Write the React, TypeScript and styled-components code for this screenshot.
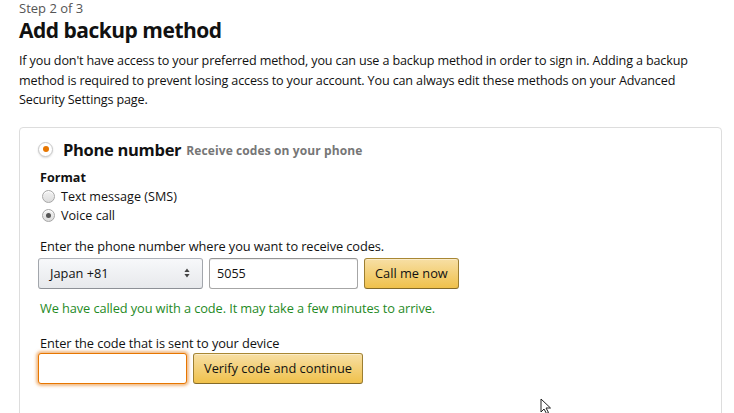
import styled, { createGlobalStyle } from "styled-components";

const GlobalStyle = createGlobalStyle`
  html, body {
    margin: 0;
    padding: 0;
    background: #fff;
    overflow: hidden;
  }
  body {
    font-family: "Open Sans", "Noto Sans", Arial, sans-serif;
    color: #111;
  }
`;

const Page = styled.main`
  position: relative;
  width: 734px;
  height: 413px;
  overflow: hidden;
  padding: 0 12px 0 19px;
  box-sizing: border-box;
`;

const StepLabel = styled.div`
  font-size: 13px;
  line-height: 14px;
  margin-top: 1px;
  color: #555;
`;

const Title = styled.h1`
  font-size: 21px;
  font-weight: 700;
  line-height: 25px;
  margin: 3px 0 8px;
  letter-spacing: -0.5px;
`;

const Intro = styled.p`
  font-size: 12.6px;
  line-height: 19.5px;
  margin: 0 0 17px;
  letter-spacing: -0.15px;
  color: #111;
`;

const Box = styled.section`
  border: 1px solid #ddd;
  border-radius: 4px;
  padding: 10px 20px 40px;
  height: 400px;
  box-sizing: border-box;
`;

const MethodHeader = styled.div`
  display: flex;
  align-items: center;
  gap: 10px;
  margin-left: -2px;
`;

const Radio = styled.span<{ $checked?: boolean; $accent?: boolean; $size: number }>`
  flex: none;
  width: ${({ $size }) => $size}px;
  height: ${({ $size }) => $size}px;
  border-radius: 50%;
  box-sizing: border-box;
  border: 1px solid ${({ $accent }) => ($accent ? "#c9c9c9" : "#a6a6a6")};
  background: ${({ $accent }) =>
    $accent ? "#fff" : "linear-gradient(#f2f2f2, #dcdcdc)"};
  box-shadow: ${({ $accent }) =>
    $accent ? "0 1px 2px rgba(0,0,0,.15)" : "inset 0 1px 0 #fff"};
  display: flex;
  align-items: center;
  justify-content: center;

  &::after {
    content: "";
    display: ${({ $checked }) => ($checked ? "block" : "none")};
    width: ${({ $size }) => Math.round($size * 0.42)}px;
    height: ${({ $size }) => Math.round($size * 0.42)}px;
    border-radius: 50%;
    background: ${({ $accent }) => ($accent ? "#e77600" : "#555")};
  }
`;

const MethodName = styled.span`
  font-size: 16.5px;
  font-weight: 700;
  letter-spacing: -0.3px;
`;

const MethodHint = styled.span`
  font-size: 12px;
  font-weight: 700;
  color: #767676;
  margin-left: -5px;
  padding-top: 3px;
  letter-spacing: 0.1px;
`;

const Body = styled.div`
  padding-top: 7px;
`;

const FieldLabel = styled.div`
  font-size: 12.6px;
  font-weight: 700;
  line-height: 19px;
`;

const Option = styled.label`
  display: flex;
  align-items: center;
  gap: 6px;
  font-size: 12.6px;
  line-height: 19px;
  padding-left: 2px;
`;

const Spacer = styled.div`
  height: 12px;
`;

const Prompt = styled.div<{ $gap: number }>`
  font-size: 12.8px;
  line-height: 19px;
  margin-bottom: ${({ $gap }) => $gap}px;
  letter-spacing: -0.1px;
`;

const Row = styled.div`
  display: flex;
  gap: 6px;
  margin-left: -2px;
`;

const Select = styled.div`
  width: 165px;
  height: 31px;
  box-sizing: border-box;
  border: 1px solid;
  border-color: #adb1b8 #a2a6ac #8d9096;
  border-radius: 3px;
  background: linear-gradient(#f7f8fa, #e7e9ec);
  display: flex;
  align-items: center;
  justify-content: space-between;
  padding: 0 12px 0 11px;
  font-size: 12.8px;
`;

const TextField = styled.div<{ $focused?: boolean; $w: number }>`
  width: ${({ $w }) => $w}px;
  height: 31px;
  box-sizing: border-box;
  border: 1px solid ${({ $focused }) => ($focused ? "#e77600" : "#a6a6a6")};
  border-top-color: ${({ $focused }) => ($focused ? "#e77600" : "#949494")};
  border-radius: 3px;
  background: #fff;
  box-shadow: ${({ $focused }) =>
    $focused
      ? "0 0 3px 2px rgba(228,121,17,.5)"
      : "0 1px 0 rgba(255,255,255,.5), inset 0 1px 0 rgba(0,0,0,.07)"};
  font-size: 12.6px;
  display: flex;
  align-items: center;
  padding: 0 7px;
`;

const Button = styled.button`
  height: 31px;
  box-sizing: border-box;
  border: 1px solid;
  border-color: #a88734 #9c7e31 #846a29;
  border-radius: 3px;
  background: linear-gradient(#f7dfa5, #f0c14b);
  box-shadow: inset 0 1px 0 rgba(255,255,255,.4);
  font-family: inherit;
  font-size: 12.8px;
  color: #111;
  padding: 0 10px;
`;

const Success = styled.div`
  color: #1f8a1f;
  font-size: 12.8px;
  line-height: 19px;
  margin: 10px 0 16px;
  letter-spacing: -0.1px;
`;

const Pointer = styled.svg`
  position: absolute;
  left: 540px;
  top: 398px;
`;

export default function App() {
  return (
    <>
      <GlobalStyle />
      <Page>
        <StepLabel>Step 2 of 3</StepLabel>
        <Title>Add backup method</Title>
        <Intro>
          If you don't have access to your preferred method, you can use a
          backup method in order to sign in. Adding a backup method is required
          to prevent losing access to your account. You can always edit these
          methods on your Advanced Security Settings page.
        </Intro>
        <Box>
          <MethodHeader>
            <Radio $checked $accent $size={15} />
            <MethodName>Phone number</MethodName>
            <MethodHint>Receive codes on your phone</MethodHint>
          </MethodHeader>
          <Body>
            <FieldLabel>Format</FieldLabel>
            <Option>
              <Radio $size={13} />
              Text message (SMS)
            </Option>
            <Option>
              <Radio $checked $size={13} />
              Voice call
            </Option>
            <Spacer />
            <Prompt $gap={2}>
              Enter the phone number where you want to receive codes.
            </Prompt>
            <Row>
              <Select>
                Japan +81
                <svg width="6" height="10" viewBox="0 0 6 10">
                  <path d="M3 0.5 L5.6 4 L0.4 4 Z M3 9.5 L5.6 6 L0.4 6 Z" fill="#444" />
                </svg>
              </Select>
              <TextField $w={149}>5055</TextField>
              <Button>Call me now</Button>
            </Row>
            <Success>
              We have called you with a code. It may take a few minutes to
              arrive.
            </Success>
            <Prompt $gap={0}>Enter the code that is sent to your device</Prompt>
            <Row>
              <TextField $focused $w={149} />
              <Button>Verify code and continue</Button>
            </Row>
          </Body>
        </Box>
        <Pointer width="14" height="16" viewBox="0 0 14 16">
          <path
            d="M1 1 L1 14 L4 11 L6.5 15.5 L8.5 14.5 L6 10 L10.5 10 Z"
            fill="#fff"
            stroke="#222"
            strokeWidth="1"
          />
        </Pointer>
      </Page>
    </>
  );
}
